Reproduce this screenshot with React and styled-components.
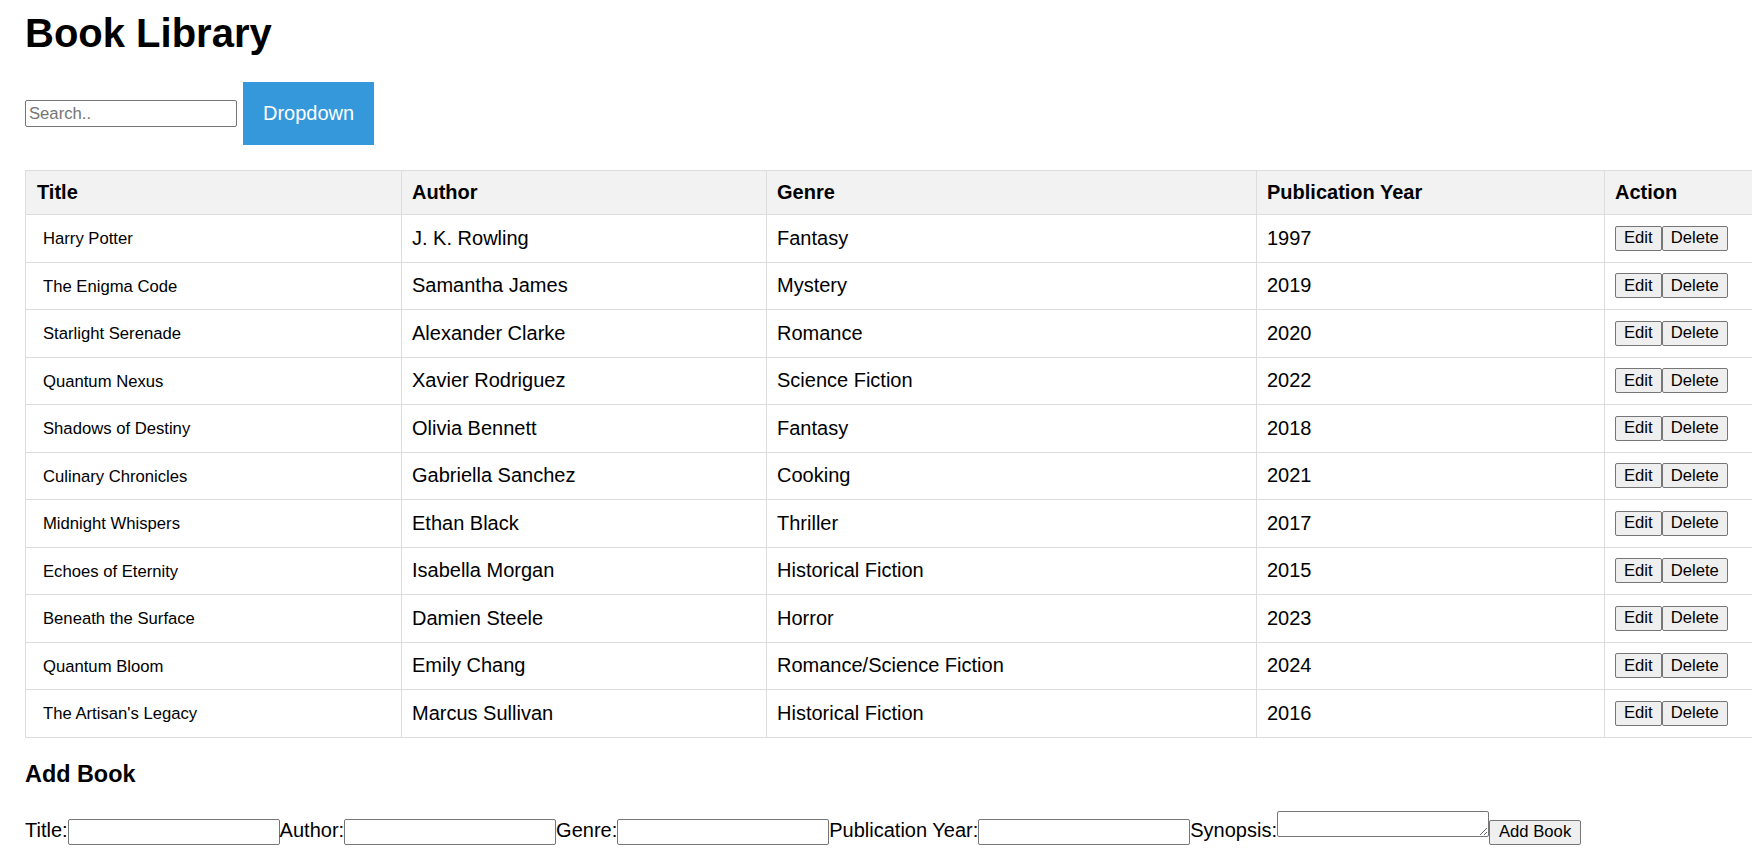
import React, { useState } from 'react';
import styled, { createGlobalStyle } from 'styled-components';

const GlobalStyle = createGlobalStyle`
  html {
    overflow: hidden;
  }

  body {
    margin: 0;
    background: #fff;
    color: #000;
    font-family: "Liberation Sans", Arial, sans-serif;
  }
`;

const Page = styled.div`
  padding: 10px 0 0 25px;
  overflow: hidden;
`;

const Heading = styled.h1`
  margin: 0;
  font-size: 40px;
  line-height: 46px;
  font-weight: bold;
`;

const Toolbar = styled.div`
  display: flex;
  align-items: center;
  gap: 6px;
  margin-top: 26px;
`;

const SearchInput = styled.input`
  box-sizing: border-box;
  width: 212px;
  height: 27px;
  margin: 0;
  padding: 1px 3px;
  border: 1px solid #767676;
  border-radius: 2px;
  font-family: inherit;
  font-size: 16.67px;
  color: #000;

  &::placeholder {
    color: #757575;
  }
`;

const DropdownButton = styled.button`
  margin: 0;
  padding: 20px;
  border: none;
  background-color: #3498db;
  color: #fff;
  font-family: inherit;
  font-size: 20px;
  line-height: 23px;
  cursor: pointer;
`;

const BookTable = styled.table`
  margin-top: 25px;
  width: 1760px;
  table-layout: fixed;
  border-collapse: collapse;
  font-size: 20px;
`;

const Col = styled.col`
  width: ${(p) => p.$width}px;
`;

const HeadRow = styled.tr`
  height: 44px;
`;

const HeadCell = styled.th`
  padding: 0 10px;
  border: 1px solid #ddd;
  background-color: #f2f2f2;
  text-align: left;
  font-weight: bold;
  line-height: 23px;

  &:first-child {
    padding-left: 11px;
  }
`;

const Row = styled.tr`
  height: 47.5px;
`;

const Cell = styled.td`
  padding: 0 10px;
  border: 1px solid #ddd;
  line-height: 23px;
  white-space: nowrap;

  &:first-child {
    padding-left: 11px;
  }
`;

const TitleText = styled.span`
  padding-left: 6px;
  font-size: 16.67px;
`;

const ActionButton = styled.button`
  box-sizing: border-box;
  height: 25px;
  margin: 0;
  padding: 0 8px;
  border: 1px solid #767676;
  border-radius: 2px;
  background-color: #efefef;
  color: #000;
  font-family: inherit;
  font-size: 16.67px;
  line-height: 20px;
  vertical-align: middle;
`;

const SectionTitle = styled.h3`
  margin: 23.4px 0;
  font-size: 23.4px;
  line-height: 27px;
  font-weight: bold;
`;

const FormRow = styled.div`
  font-size: 20px;
  white-space: nowrap;
`;

const FieldLabel = styled.label`
  color: #000;
`;

const FieldInput = styled.input`
  box-sizing: border-box;
  width: 212px;
  height: 26px;
  margin: 0;
  padding: 1px 3px;
  border: 1px solid #767676;
  border-radius: 2px;
  font-family: inherit;
  font-size: 16.67px;
`;

const SynopsisArea = styled.textarea`
  box-sizing: border-box;
  width: 212px;
  height: 26px;
  margin: 0;
  padding: 2px;
  border: 1px solid #767676;
  border-radius: 2px;
  font-family: "Liberation Mono", monospace;
  font-size: 16.67px;
`;

const SubmitButton = styled(ActionButton)`
  vertical-align: baseline;
  padding: 0 9px;
`;

const books = [
  { title: 'Harry Potter', author: 'J. K. Rowling', genre: 'Fantasy', year: 1997 },
  { title: 'The Enigma Code', author: 'Samantha James', genre: 'Mystery', year: 2019 },
  { title: 'Starlight Serenade', author: 'Alexander Clarke', genre: 'Romance', year: 2020 },
  { title: 'Quantum Nexus', author: 'Xavier Rodriguez', genre: 'Science Fiction', year: 2022 },
  { title: 'Shadows of Destiny', author: 'Olivia Bennett', genre: 'Fantasy', year: 2018 },
  { title: 'Culinary Chronicles', author: 'Gabriella Sanchez', genre: 'Cooking', year: 2021 },
  { title: 'Midnight Whispers', author: 'Ethan Black', genre: 'Thriller', year: 2017 },
  { title: 'Echoes of Eternity', author: 'Isabella Morgan', genre: 'Historical Fiction', year: 2015 },
  { title: 'Beneath the Surface', author: 'Damien Steele', genre: 'Horror', year: 2023 },
  { title: 'Quantum Bloom', author: 'Emily Chang', genre: 'Romance/Science Fiction', year: 2024 },
  { title: "The Artisan's Legacy", author: 'Marcus Sullivan', genre: 'Historical Fiction', year: 2016 },
];

const columns = [
  { label: 'Title', width: 376 },
  { label: 'Author', width: 365 },
  { label: 'Genre', width: 490 },
  { label: 'Publication Year', width: 348 },
  { label: 'Action', width: 180 },
];

function App() {
  const [search, setSearch] = useState('');

  return (
    <Page>
      <GlobalStyle />
      <Heading>Book Library</Heading>

      <Toolbar>
        <SearchInput
          type="text"
          placeholder="Search.."
          value={search}
          onChange={(e) => setSearch(e.target.value)}
        />
        <DropdownButton>Dropdown</DropdownButton>
      </Toolbar>

      <BookTable>
        <colgroup>
          {columns.map((col) => (
            <Col key={col.label} $width={col.width} />
          ))}
        </colgroup>
        <thead>
          <HeadRow>
            {columns.map((col) => (
              <HeadCell key={col.label}>{col.label}</HeadCell>
            ))}
          </HeadRow>
        </thead>
        <tbody>
          {books.map((book) => (
            <Row key={book.title}>
              <Cell>
                <TitleText>{book.title}</TitleText>
              </Cell>
              <Cell>{book.author}</Cell>
              <Cell>{book.genre}</Cell>
              <Cell>{book.year}</Cell>
              <Cell>
                <ActionButton>Edit</ActionButton>
                <ActionButton>Delete</ActionButton>
              </Cell>
            </Row>
          ))}
        </tbody>
      </BookTable>

      <SectionTitle>Add Book</SectionTitle>
      <FormRow>
        <FieldLabel htmlFor="title">Title:</FieldLabel>
        <FieldInput id="title" type="text" />
        <FieldLabel htmlFor="author">Author:</FieldLabel>
        <FieldInput id="author" type="text" />
        <FieldLabel htmlFor="genre">Genre:</FieldLabel>
        <FieldInput id="genre" type="text" />
        <FieldLabel htmlFor="year">Publication Year:</FieldLabel>
        <FieldInput id="year" type="text" />
        <FieldLabel htmlFor="synopsis">Synopsis:</FieldLabel>
        <SynopsisArea id="synopsis" />
        <SubmitButton>Add Book</SubmitButton>
      </FormRow>
    </Page>
  );
}

export default App;
